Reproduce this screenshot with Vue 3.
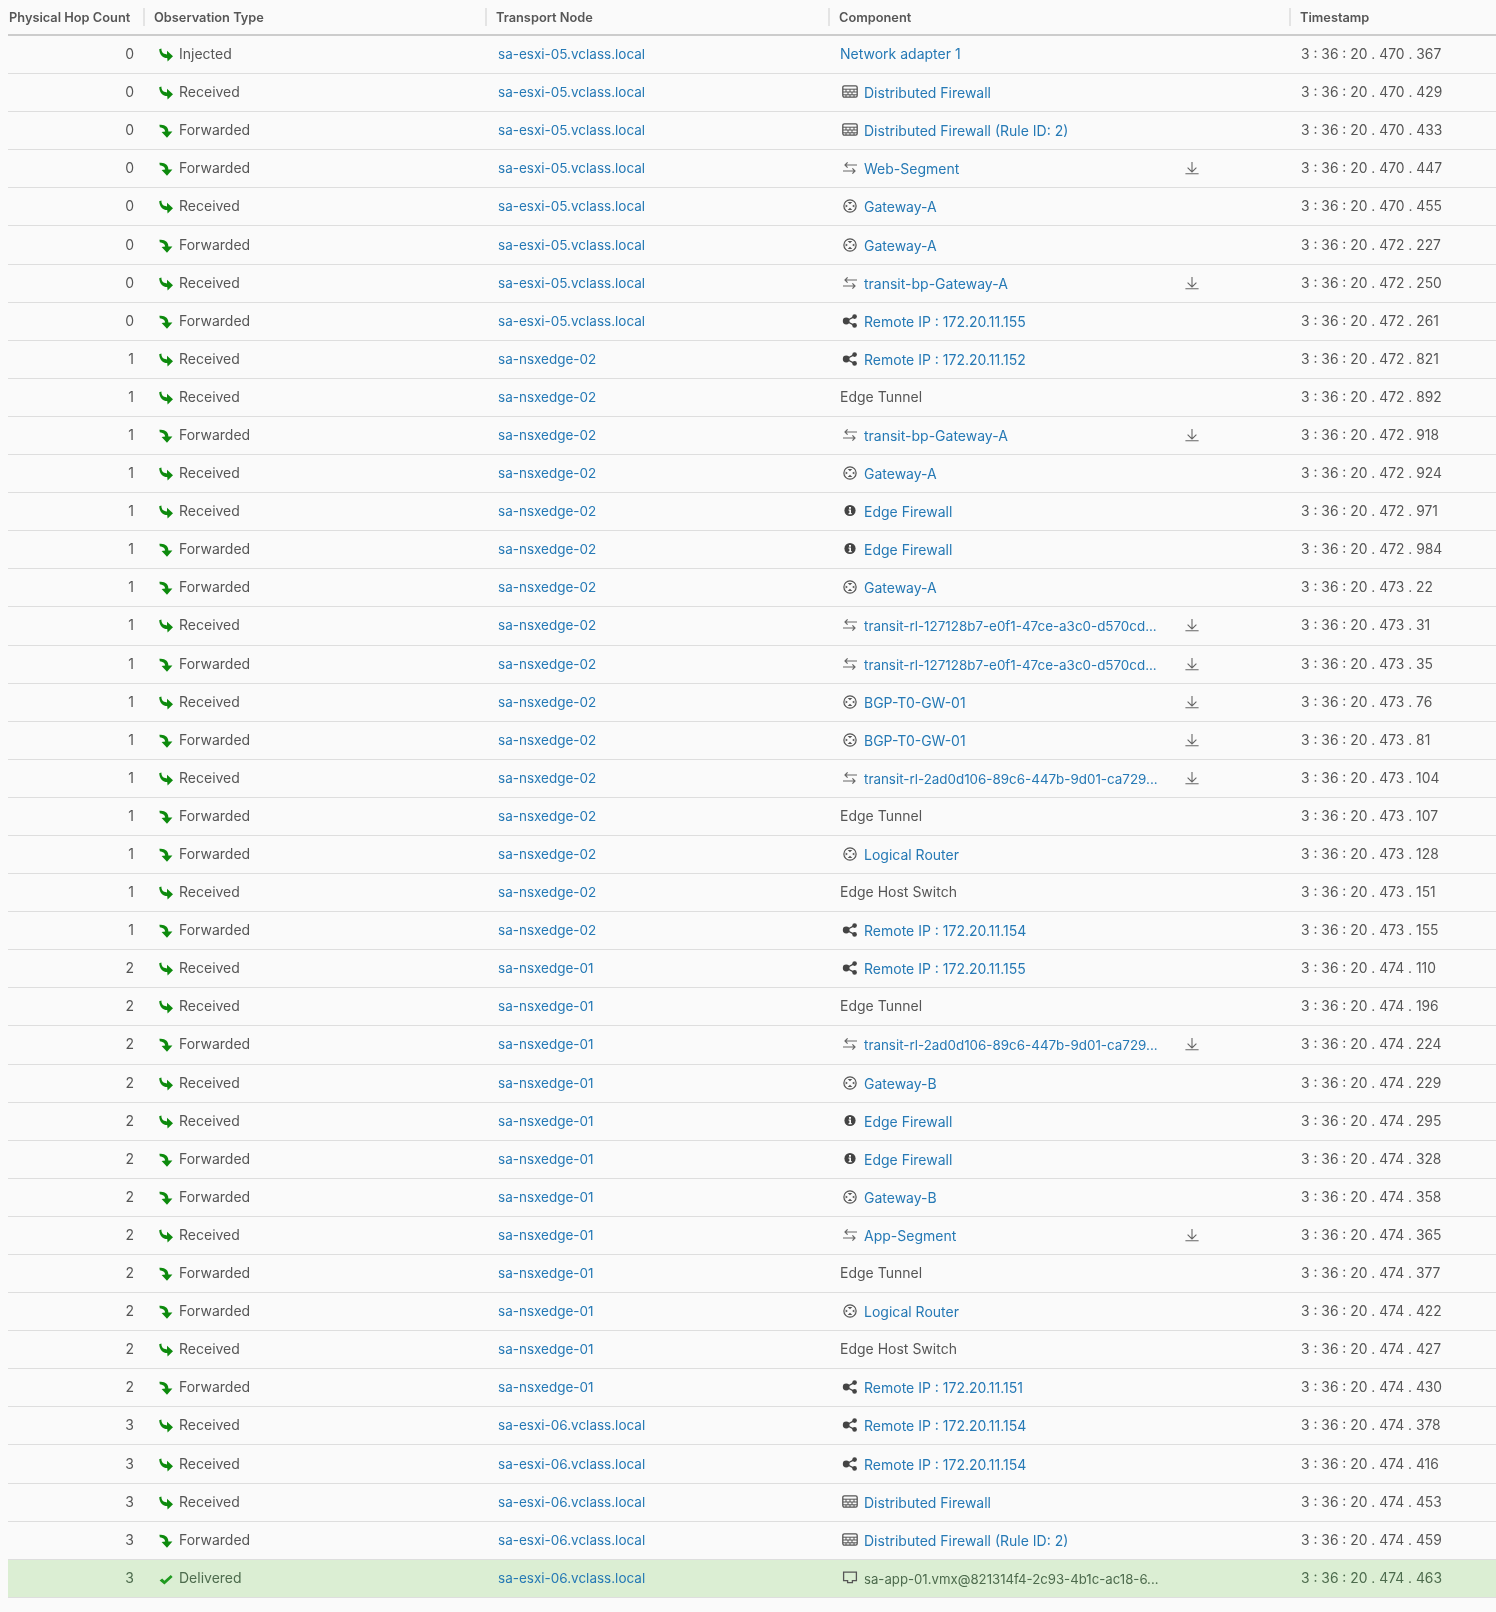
<script setup>
const T = { I: 'Injected', R: 'Received', F: 'Forwarded', D: 'Delivered' }
const E5 = 'sa-esxi-05.vclass.local', E6 = 'sa-esxi-06.vclass.local', N2 = 'sa-nsxedge-02', N1 = 'sa-nsxedge-01'
const RL1 = 'transit-rl-127128b7-e0f1-47ce-a3c0-d570cd...'
const RL2 = 'transit-rl-2ad0d106-89c6-447b-9d01-ca729...'
const S = (n) => ({ icon: 'seg', name: n, dl: true, long: n === RL1 || n === RL2 })
const G = (n) => ({ icon: 'gw', name: n })
const GD = (n) => ({ icon: 'gw', name: n, dl: true })
const W = (n) => ({ icon: 'fw', name: n })
const EF = { icon: 'info', name: 'Edge Firewall' }
const IP = (n) => ({ icon: 'share', name: 'Remote IP : 172.20.11.' + n })
const P = (n) => ({ name: n, plain: true })
const raw = [
  [0, 'I', E5, { name: 'Network adapter 1' }, '470 . 367'],
  [0, 'R', E5, W('Distributed Firewall'), '470 . 429'],
  [0, 'F', E5, W('Distributed Firewall (Rule ID: 2)'), '470 . 433'],
  [0, 'F', E5, S('Web-Segment'), '470 . 447'],
  [0, 'R', E5, G('Gateway-A'), '470 . 455'],
  [0, 'F', E5, G('Gateway-A'), '472 . 227'],
  [0, 'R', E5, S('transit-bp-Gateway-A'), '472 . 250'],
  [0, 'F', E5, IP(155), '472 . 261'],
  [1, 'R', N2, IP(152), '472 . 821'],
  [1, 'R', N2, P('Edge Tunnel'), '472 . 892'],
  [1, 'F', N2, S('transit-bp-Gateway-A'), '472 . 918'],
  [1, 'R', N2, G('Gateway-A'), '472 . 924'],
  [1, 'R', N2, EF, '472 . 971'],
  [1, 'F', N2, EF, '472 . 984'],
  [1, 'F', N2, G('Gateway-A'), '473 . 22'],
  [1, 'R', N2, S(RL1), '473 . 31'],
  [1, 'F', N2, S(RL1), '473 . 35'],
  [1, 'R', N2, GD('BGP-T0-GW-01'), '473 . 76'],
  [1, 'F', N2, GD('BGP-T0-GW-01'), '473 . 81'],
  [1, 'R', N2, S(RL2), '473 . 104'],
  [1, 'F', N2, P('Edge Tunnel'), '473 . 107'],
  [1, 'F', N2, G('Logical Router'), '473 . 128'],
  [1, 'R', N2, P('Edge Host Switch'), '473 . 151'],
  [1, 'F', N2, IP(154), '473 . 155'],
  [2, 'R', N1, IP(155), '474 . 110'],
  [2, 'R', N1, P('Edge Tunnel'), '474 . 196'],
  [2, 'F', N1, S(RL2), '474 . 224'],
  [2, 'R', N1, G('Gateway-B'), '474 . 229'],
  [2, 'R', N1, EF, '474 . 295'],
  [2, 'F', N1, EF, '474 . 328'],
  [2, 'F', N1, G('Gateway-B'), '474 . 358'],
  [2, 'R', N1, S('App-Segment'), '474 . 365'],
  [2, 'F', N1, P('Edge Tunnel'), '474 . 377'],
  [2, 'F', N1, G('Logical Router'), '474 . 422'],
  [2, 'R', N1, P('Edge Host Switch'), '474 . 427'],
  [2, 'F', N1, IP(151), '474 . 430'],
  [3, 'R', E6, IP(154), '474 . 378'],
  [3, 'R', E6, IP(154), '474 . 416'],
  [3, 'R', E6, W('Distributed Firewall'), '474 . 453'],
  [3, 'F', E6, W('Distributed Firewall (Rule ID: 2)'), '474 . 459'],
  [3, 'D', E6, { icon: 'vm', name: 'sa-app-01.vmx@821314f4-2c93-4b1c-ac18-6...', plain: true, vm: true }, '474 . 463'],
]
const rows = raw.map(([hop, t, node, c, ts]) => ({ hop, t, type: T[t], node, c, ts: '3 : 36 : 20 . ' + ts }))
</script>

<template>
  <div class="page">
    <div class="row head">
      <div class="hcell hop-h">Physical Hop Count</div>
      <div class="hcell sep">Observation Type</div>
      <div class="hcell sep">Transport Node</div>
      <div class="hcell sep">Component</div>
      <div class="hcell sep">Timestamp</div>
    </div>
    <div v-for="(r, i) in rows" :key="i" class="row body" :class="{ ok: r.t === 'D' }">
      <div class="cell hop">{{ r.hop }}</div>
      <div class="cell type">
        <svg v-if="r.t === 'I' || r.t === 'R'" class="ti" viewBox="0 0 16 15">
          <path d="M1.2 1.2 L3.4 .6 C3.4 3.6 4.4 6.2 9 6.4 L9 2.8 L15 8.2 L9.6 13.6 L9.2 10 C4.6 10 1.6 7 1.2 1.2Z" fill="#0d8a0d"/>
        </svg>
        <svg v-else-if="r.t === 'F'" class="ti" viewBox="0 0 16 15">
          <path d="M1.4 .8 C5.6 .8 10.2 1.8 10.4 7.4 L14.4 7.4 L9 13.8 L3.6 8 L7.2 7.6 C7 4.8 4.6 3.6 1.8 3.2Z" fill="#0d8a0d"/>
        </svg>
        <svg v-else class="ti" viewBox="0 0 16 15">
          <path d="M1.6 8.4 L4.2 6.4 L6.4 8.8 L12.8 3 L14.6 5 L6.4 12.4Z" fill="#1f9a1f"/>
        </svg>
        <span>{{ r.type }}</span>
      </div>
      <div class="cell node-cell"><span class="link node">{{ r.node }}</span></div>
      <div class="cell comp" :class="{ shifted: r.c.icon }">
        <svg v-if="r.c.icon === 'fw'" class="ci" viewBox="0 0 16 14">
          <rect x=".8" y=".8" width="14.4" height="11.4" rx="1.6" fill="none" stroke="#555" stroke-width="1.3"/>
          <path d="M1 4.2H15M1 7H15M1 9.8H15" stroke="#555" stroke-width="1"/>
          <path d="M4 4.2V7M8 4.2V7M12 4.2V7M6 7V9.8M10 7V9.8M4 9.8V12M8 9.8V12M12 9.8V12" stroke="#555" stroke-width="1"/>
        </svg>
        <svg v-else-if="r.c.icon === 'seg'" class="ci" viewBox="0 0 16 14">
          <path d="M15 4H3M5.6 1.4 3 4l2.6 2.6M1 10h12M10.4 7.4 13 10l-2.6 2.6" fill="none" stroke="#666" stroke-width="1.2"/>
        </svg>
        <svg v-else-if="r.c.icon === 'gw'" class="ci" viewBox="0 0 16 16">
          <circle cx="8" cy="8" r="7" fill="none" stroke="#555" stroke-width="1.4"/>
          <path d="M5.4 3.4h5.2L8 6ZM5.4 12.6h5.2L8 10ZM3 6.4v3.2L5.6 8ZM13 6.4v3.2L10.4 8Z" fill="#555"/>
        </svg>
        <svg v-else-if="r.c.icon === 'share'" class="ci" viewBox="0 0 16 14">
          <path d="M4 7 12.4 2.6M4 7l8.4 4.4" stroke="#444" stroke-width="1.4"/>
          <circle cx="4.2" cy="7" r="3.4" fill="#444"/>
          <circle cx="12.6" cy="2.6" r="2.3" fill="#444"/>
          <circle cx="12.6" cy="11.4" r="2.3" fill="#444"/>
        </svg>
        <svg v-else-if="r.c.icon === 'info'" class="ci" viewBox="0 0 16 14">
          <circle cx="8" cy="6.5" r="5.6" fill="#444"/>
          <path d="M7 3h2v1.7H7ZM6.6 5.6h2.4v3.4h.7v1.2H6.6V9h.8V6.8h-.8Z" fill="#fafafa"/>
        </svg>
        <svg v-else-if="r.c.icon === 'vm'" class="ci" viewBox="0 0 16 14">
          <path d="M1.6 1.2H14.4V9.6H10.4V11.6H5.6V9.6H1.6Z" fill="none" stroke="#555" stroke-width="1.3"/>
        </svg>
        <span :class="[r.c.plain ? 'plain' : 'link', { long: r.c.long, vmname: r.c.vm }]">{{ r.c.name }}</span>
        <svg v-if="r.c.dl" class="dl" viewBox="0 0 14 14">
          <path d="M7 1V11M2.6 6.6 7 11l4.4-4.4M.4 12.8H13.6" fill="none" stroke="#666" stroke-width="1.1"/>
        </svg>
      </div>
      <div class="cell ts">{{ r.ts }}</div>
    </div>
  </div>
</template>

<style>
html, body { background: #fafafa; }
</style>

<style scoped>
.page {
  box-sizing: border-box;
  width: 1496px;
  height: 1612px;
  padding-left: 8px;
  background: #fafafa;
  color: #565656;
  font: 14px/16px Inter, "Liberation Sans", sans-serif;
  filter: blur(0.5px);
}
.row {
  display: grid;
  grid-template-columns: 135px 342px 343px 461px 1fr;
  box-sizing: border-box;
}
.head {
  height: 36px;
  align-items: center;
  border-bottom: 2px solid #ccc;
  font-size: 12.8px;
  font-weight: 600;
}
.hcell { white-space: nowrap; line-height: 16px; height: 16px; padding-top: 2px; }
.hop-h { padding-left: 1px; }
.sep {
  border-left: 2px solid #e4e4e4;
  padding-left: 9px;
}
.body {
  height: 38.1px;
  align-items: center;
  border-bottom: 1.5px solid #dedede;
}
.ok {
  background: #dbeed3;
  color: #4d6b4d;
}
.cell {
  display: flex;
  align-items: center;
  padding: 0 0 1px 12px;
  white-space: nowrap;
}
.hop {
  justify-content: flex-end;
  padding: 0 9px 1px 0;
}
.type { padding-left: 15px; }
.ti { width: 16px; height: 15px; margin: 3px 5px 0 0; flex: none; }
.link { color: #2579b5; }
.plain { color: inherit; }
.node-cell { padding-left: 13px; }
.node { font-size: 13.5px; }
.long { font-size: 13.4px; }
.vmname { font-size: 13.2px; }
.comp { position: relative; }
.shifted { padding-left: 14px; }
.shifted > span { padding-top: 2px; }
.ci { width: 16px; height: 14px; margin-right: 6px; flex: none; }
.dl { position: absolute; left: 357px; top: 2px; width: 14px; height: 14px; }
.ts { padding-left: 12px; font-size: 13.85px; }
</style>
